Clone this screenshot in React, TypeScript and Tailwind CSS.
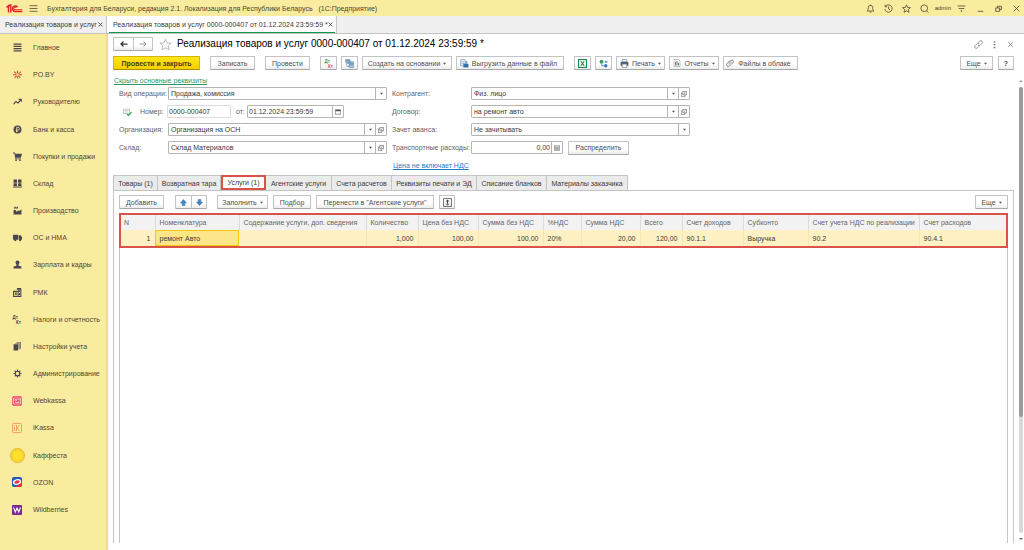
import type { ReactNode } from 'react';
import clsx from 'clsx';

const BUTTON =
  'flex h-[14px] shrink-0 items-center justify-center rounded-[1px] border border-[#c3c3c3] border-b-[#a8a8a8] bg-linear-to-b from-white from-60% to-[#ececec] text-[#4d4d4d] whitespace-nowrap';

interface Column {
  title: string;
  value: string;
  width?: string;
  right?: boolean;
}

const COLUMNS: Column[] = [
  { title: 'N', value: '1', width: 'w-[34px]', right: true },
  { title: 'Номенклатура', value: 'ремонт Авто', width: 'w-[84px]' },
  { title: 'Содержание услуги, доп. сведения', value: '', width: 'w-[127px]' },
  { title: 'Количество', value: '1,000', width: 'w-[52px]', right: true },
  { title: 'Цена без НДС', value: '100,00', width: 'w-[60px]', right: true },
  { title: 'Сумма без НДС', value: '100,00', width: 'w-[65px]', right: true },
  { title: '%НДС', value: '20%', width: 'w-[38px]' },
  { title: 'Сумма НДС', value: '20,00', width: 'w-[59px]', right: true },
  { title: 'Всего', value: '120,00', width: 'w-[42px]', right: true },
  { title: 'Счет доходов', value: '90.1.1', width: 'w-[61px]' },
  { title: 'Субконто', value: 'Выручка', width: 'w-[65px]' },
  { title: 'Счет учета НДС по реализации', value: '90.2', width: 'w-[111px]' },
  { title: 'Счет расходов', value: '90.4.1' },
];

const TABS = [
  { title: 'Товары (1)', width: 'w-[45px]' },
  { title: 'Возвратная тара', width: 'w-[63px]' },
  { title: 'Услуги (1)', width: 'w-[45px]', active: true },
  { title: 'Агентские услуги', width: 'w-[66px]' },
  { title: 'Счета расчетов', width: 'w-[60px]' },
  { title: 'Реквизиты печати и ЭД', width: 'w-[85px]' },
  { title: 'Списание бланков', width: 'w-[70px]' },
  { title: 'Материалы заказчика', width: 'w-[81px]' },
];

const SECTIONS: { title: string; icon: ReactNode }[] = [
  { title: 'Главное', icon: <MenuLinesIcon /> },
  { title: 'PO.BY', icon: <StarBurstIcon /> },
  { title: 'Руководителю', icon: <TrendIcon /> },
  { title: 'Банк и касса', icon: <RubleIcon /> },
  { title: 'Покупки и продажи', icon: <CartIcon /> },
  { title: 'Склад', icon: <WarehouseIcon /> },
  { title: 'Производство', icon: <FactoryIcon /> },
  { title: 'ОС и НМА', icon: <TruckIcon /> },
  { title: 'Зарплата и кадры', icon: <PersonIcon /> },
  { title: 'РМК', icon: <RegisterIcon /> },
  { title: 'Налоги и отчетность', icon: <DebitCreditIcon dark /> },
  { title: 'Настройки учета', icon: <BooksIcon /> },
  { title: 'Администрирование', icon: <GearIcon /> },
  { title: 'Webkassa', icon: <WebkassaIcon /> },
  { title: 'iKassa', icon: <IKassaIcon /> },
  { title: 'Каффеста', icon: <CoinIcon /> },
  { title: 'OZON', icon: <OzonIcon /> },
  { title: 'Wildberries', icon: <WildberriesIcon /> },
];

export default function App() {
  return (
    <div className="flex h-screen flex-col overflow-hidden bg-white font-['Liberation_Sans',Arial,sans-serif] text-[7px] leading-[9px] text-[#3a3a3a]">
      <TitleBar />
      <WindowTabs />
      <div className="flex min-h-0 flex-1">
        <Sidebar />
        <main className="flex min-w-0 flex-1 flex-col pl-[5px]">
          <DocumentHeader />
          <Toolbar />
          <div className="flex min-h-0 flex-1">
            <div className="flex min-w-0 flex-1 flex-col">
              <a href="#details" className="mt-[6px] self-start pl-[1px] text-[#2f9a63] underline">
                Скрыть основные реквизиты
              </a>
              <DocumentForm />
              <TabStrip />
              <ServicesPanel />
            </div>
            <Scrollbar />
          </div>
        </main>
      </div>
    </div>
  );
}

function TitleBar() {
  return (
    <header className="flex h-[16px] shrink-0 items-center bg-[#faec9e] pr-[3px] pl-[6px] text-[#4b4430]">
      <svg viewBox="0 0 32 16" className="h-[9px] w-[18px]" fill="none" stroke="#e0242b" strokeWidth="2.600">
        <path d="M1 6l3.500-3V15M8.500 15V1.500L5 4" />
        <path d="M20.500 5.500A5 5 0 1 0 16 13.500h13" />
        <path d="M18 6.500A2.400 2.400 0 1 0 16 10.200h13" strokeWidth="1.800" />
      </svg>
      <button type="button" aria-label="Меню" className="ml-[5px]">
        <Stroke className="size-[9px]">
          <path d="M1 3h14M1 8h14M1 13h14" />
        </Stroke>
      </button>
      <span className="ml-[9px] flex-1 whitespace-pre">
        Бухгалтерия для Беларуси, редакция 2.1. Локализация для Республики Беларусь{'   '}(1С:Предприятие)
      </span>
      <div className="flex items-center gap-[9px]">
        <IconButton label="Уведомления">
          <path d="M2 12.500h12c-2-2-2-3-2-6a4 4 0 0 0-8 0c0 3 0 4-2 6zM6.500 14.500h3M8 1v1.500" />
        </IconButton>
        <IconButton label="История">
          <path d="M2.500 4.500A6.500 6.500 0 1 1 1.500 9M2 1.500v3.500h3.500M8 4.500V8.500l3 2" />
        </IconButton>
        <IconButton label="Избранное">
          <path d="M8 1.500l2 4.500 5 .5-3.800 3.300 1.200 4.900L8 12.100l-4.400 2.600 1.200-4.900L1 6.500l5-.5z" />
        </IconButton>
        <IconButton label="Поиск">
          <circle cx="7.500" cy="7.500" r="6" />
          <path d="M11.500 12l3.500 3" />
        </IconButton>
        <span className="-mx-[3px] text-[6px]">admin</span>
        <IconButton label="Настройки">
          <path d="M1 3.500h14M3 8h10M7 12h2l-1 1.500z" />
        </IconButton>
      </div>
      <div className="ml-[10px] flex items-center gap-[9px]">
        <IconButton label="Свернуть">
          <path d="M3 13h10" />
        </IconButton>
        <IconButton label="Развернуть">
          <path d="M3 7h7v6H3zM6 7V4h7v6h-3" />
        </IconButton>
        <IconButton label="Закрыть">
          <path d="M3 3l10 10M13 3L3 13" />
        </IconButton>
      </div>
    </header>
  );
}

function WindowTabs() {
  return (
    <div className="flex h-[18px] shrink-0 items-stretch border-b border-[#c4c4c4] bg-[#f0f0f0]">
      <div className="flex w-[107px] items-center justify-between border-r border-[#c4c4c4] pr-[3px] pl-[5px]">
        <span className="whitespace-nowrap">Реализация товаров и услуг</span>
        <CloseMark />
      </div>
      <div className="flex w-[230px] border-r border-[#c4c4c4] bg-white px-[2px]">
        <div className="flex flex-1 items-center justify-between border-b border-[#0b9a50] pr-[2px] pl-[4px]">
          <span className="whitespace-nowrap">Реализация товаров и услуг 0000-000407 от 01.12.2024 23:59:59 *</span>
          <CloseMark />
        </div>
      </div>
    </div>
  );
}

function CloseMark() {
  return (
    <button type="button" aria-label="Закрыть вкладку">
      <svg viewBox="0 0 16 16" className="size-[5px]" fill="none" stroke="#444" strokeWidth="3">
        <path d="M2 2l12 12M14 2L2 14" />
      </svg>
    </button>
  );
}

function Sidebar() {
  return (
    <nav className="flex w-[108px] shrink-0 flex-col border-r-2 border-[#f0dc82] bg-[#faec9e] pb-[27px]">
      {SECTIONS.map((section) => (
        <a key={section.title} href="#section" className="flex flex-1 items-center text-[#4e4536]">
          <span className="ml-[9px] flex w-[16px] justify-center">{section.icon}</span>
          <span className="ml-[8px] whitespace-nowrap">{section.title}</span>
        </a>
      ))}
    </nav>
  );
}

function DocumentHeader() {
  return (
    <div className="flex h-[20px] shrink-0 items-center pr-[9px]">
      <div className="flex">
        <button type="button" aria-label="Назад" className={clsx(BUTTON, 'w-[21px]')}>
          <svg viewBox="0 0 16 16" className="size-[8px]" fill="none" stroke="#333" strokeWidth="2.500">
            <path d="M15 8H2M7 3L2 8l5 5" />
          </svg>
        </button>
        <button type="button" aria-label="Вперед" className={clsx(BUTTON, '-ml-px w-[20px]')}>
          <svg viewBox="0 0 16 16" className="size-[8px]" fill="none" stroke="#999" strokeWidth="2">
            <path d="M1 8h13M9 3l5 5-5 5" />
          </svg>
        </button>
      </div>
      <button type="button" aria-label="В избранное" className="ml-[6px]">
        <svg viewBox="0 0 16 16" className="size-[13px]" fill="none" stroke="#aaa">
          <path d="M8 1.500l2 4.500 5 .3-3.800 3.300 1.200 4.900L8 12l-4.400 2.500 1.200-4.900L1 6.300l5-.3z" />
        </svg>
      </button>
      <h1 className="ml-[5px] flex-1 text-[10px] leading-[14px] whitespace-nowrap text-black">
        Реализация товаров и услуг 0000-000407 от 01.12.2024 23:59:59 *
      </h1>
      <div className="flex items-center gap-[7px] text-[#777]">
        <IconButton label="Ссылка">
          <path d="M7 5l3-3a2.500 2.500 0 0 1 4 4l-3 3a2.500 2.500 0 0 1-4 0M9 11l-3 3a2.500 2.500 0 0 1-4-4l3-3a2.500 2.500 0 0 1 4 0" />
        </IconButton>
        <IconButton label="Действия">
          <path d="M8 2v2.500M8 7v2.500M8 12v2.500" strokeWidth="3" />
        </IconButton>
        <IconButton label="Закрыть документ">
          <path d="M4 4l8 8M12 4l-8 8" />
        </IconButton>
      </div>
    </div>
  );
}

function Toolbar() {
  return (
    <div className="mt-[2px] flex shrink-0 items-center pr-[10px]">
      <button
        type="button"
        className="h-[14px] w-[87px] shrink-0 rounded-[1px] border border-[#d5b400] border-b-[#a88f00] bg-linear-to-b from-[#ffe619] to-[#f5cf00] font-bold text-[#4a4020]"
      >
        Провести и закрыть
      </button>
      <button type="button" className={clsx(BUTTON, 'ml-[10px] w-[45px]')}>Записать</button>
      <button type="button" className={clsx(BUTTON, 'ml-[10px] w-[45px]')}>Провести</button>
      <button type="button" aria-label="Показать проводки" className={clsx(BUTTON, 'ml-[10px] w-[17px]')}>
        <DebitCreditIcon />
      </button>
      <button type="button" aria-label="Структура подчиненности" className={clsx(BUTTON, 'ml-[4px] w-[17px]')}>
        <StructureIcon />
      </button>
      <button type="button" className={clsx(BUTTON, 'ml-[4px] w-[90px] gap-[3px]')}>
        Создать на основании <Caret />
      </button>
      <button type="button" className={clsx(BUTTON, 'ml-[4px] w-[108px] gap-[3px] pr-[3px]')}>
        <ExportIcon /> Выгрузить данные в файл
      </button>
      <button type="button" aria-label="Excel" className={clsx(BUTTON, 'ml-[10px] w-[17px]')}>
        <ExcelIcon />
      </button>
      <button type="button" aria-label="Обмен" className={clsx(BUTTON, 'ml-[4px] w-[17px]')}>
        <ExchangeIcon />
      </button>
      <button type="button" className={clsx(BUTTON, 'ml-[4px] w-[49px] gap-[3px]')}>
        <PrinterIcon /> Печать <Caret />
      </button>
      <button type="button" className={clsx(BUTTON, 'ml-[4px] w-[50px] gap-[3px]')}>
        <ReportIcon /> Отчеты <Caret />
      </button>
      <button type="button" className={clsx(BUTTON, 'ml-[4px] w-[75px] gap-[4px] pr-[4px]')}>
        <ClipIcon /> Файлы в облаке
      </button>
      <button type="button" className={clsx(BUTTON, 'ml-auto w-[33px] gap-[3px]')}>
        Еще <Caret />
      </button>
      <button type="button" className={clsx(BUTTON, 'ml-[5px] w-[16px] font-bold')}>?</button>
    </div>
  );
}

function DocumentForm() {
  return (
    <form className="mt-[2px] flex shrink-0 gap-[5px] pl-[6px]">
      <div className="flex w-[268px] flex-col gap-[5px]">
        <SelectField id="operation" label="Вид операции:" value="Продажа, комиссия" labelWidth="w-[49px]" />
        <div className="flex h-[13px] items-center">
          <span className="ml-[4px] flex w-[17px]">
            <PostedIcon />
          </span>
          <label htmlFor="number" className="w-[27px] text-[#5f5f5f]">Номер:</label>
          <input
            id="number"
            defaultValue="0000-000407"
            className="h-[13px] w-[64px] rounded-[1px] border border-[#dcdcdc] pl-[1px]"
          />
          <label htmlFor="date" className="ml-[5px] w-[11px] text-[#5f5f5f]">от:</label>
          <div className="flex h-[13px] w-[97px] rounded-[1px] border border-[#b5b5b5]">
            <input id="date" defaultValue="01.12.2024 23:59:59" className="min-w-0 flex-1 pl-[1px]" />
            <FieldButton label="Выбрать дату"><CalendarIcon /></FieldButton>
          </div>
        </div>
        <SelectField id="company" label="Организация:" value="Организация на ОСН" labelWidth="w-[49px]" open />
        <SelectField id="store" label="Склад:" value="Склад Материалов" labelWidth="w-[49px]" open />
      </div>
      <div className="flex w-[298px] flex-col gap-[5px]">
        <SelectField id="partner" label="Контрагент:" value="Физ. лицо" labelWidth="w-[79px]" open />
        <SelectField id="contract" label="Договор:" value="на ремонт авто" labelWidth="w-[79px]" open />
        <SelectField id="advance" label="Зачет аванса:" value="Не зачитывать" labelWidth="w-[79px]" />
        <div className="flex h-[13px] items-center">
          <label htmlFor="transport" className="w-[79px] whitespace-nowrap text-[#5f5f5f]">Транспортные расходы:</label>
          <div className="flex h-[13px] w-[92px] rounded-[1px] border border-[#b5b5b5]">
            <input id="transport" defaultValue="0,00" className="min-w-0 flex-1 pr-[1px] text-right" />
            <FieldButton label="Калькулятор"><CalculatorIcon /></FieldButton>
          </div>
          <button type="button" className={clsx(BUTTON, 'ml-[5px] w-[61px]')}>Распределить</button>
        </div>
        <a href="#price" className="self-start pl-[1px] leading-[13px] text-[#2a78c0] underline">Цена не включает НДС</a>
      </div>
    </form>
  );
}

interface SelectFieldProps {
  id: string;
  label: string;
  value: string;
  labelWidth: string;
  open?: boolean;
}

function SelectField({ id, label, value, labelWidth, open }: SelectFieldProps) {
  return (
    <div className="flex h-[13px] items-center">
      <label htmlFor={id} className={clsx('shrink-0 whitespace-nowrap text-[#5f5f5f]', labelWidth)}>{label}</label>
      <div className="flex h-[13px] flex-1 rounded-[1px] border border-[#b5b5b5]">
        <select id={id} defaultValue={value} className="min-w-0 flex-1 appearance-none pl-[2px]">
          <option>{value}</option>
        </select>
        <FieldButton label="Выбрать"><Caret /></FieldButton>
        {open && <FieldButton label="Открыть"><OpenIcon /></FieldButton>}
      </div>
    </div>
  );
}

function FieldButton({ label, children }: { label: string; children: ReactNode }) {
  return (
    <button
      type="button"
      aria-label={label}
      className="flex w-[11px] shrink-0 items-center justify-center border-l border-[#b5b5b5] text-[#555]"
    >
      {children}
    </button>
  );
}

function TabStrip() {
  return (
    <div role="tablist" className="mt-[3px] flex h-[15px] shrink-0">
      {TABS.map((tab) => (
        <button
          key={tab.title}
          type="button"
          role="tab"
          aria-selected={!!tab.active}
          className={clsx(
            'shrink-0 whitespace-nowrap',
            tab.width,
            tab.active
              ? 'border-2 border-[#d9534a] bg-white'
              : 'border-t border-r border-[#c4c4c4] bg-[#ebebeb] first:border-l',
          )}
        >
          {tab.title}
        </button>
      ))}
    </div>
  );
}

function ServicesPanel() {
  return (
    <section className="mr-[3px] mb-[7px] flex min-h-0 flex-1 flex-col border-x border-t border-[#c4c4c4] px-[5px] pt-[4px]">
      <div className="flex shrink-0">
        <button type="button" className={clsx(BUTTON, 'w-[45px]')}>Добавить</button>
        <button type="button" aria-label="Вверх" className={clsx(BUTTON, 'ml-[11px] w-[17px]')}>
          <ArrowIcon />
        </button>
        <button type="button" aria-label="Вниз" className={clsx(BUTTON, '-ml-px w-[16px]')}>
          <ArrowIcon down />
        </button>
        <button type="button" className={clsx(BUTTON, 'ml-[10px] w-[51px] gap-[3px]')}>
          Заполнить <Caret />
        </button>
        <button type="button" className={clsx(BUTTON, 'ml-[5px] w-[38px]')}>Подбор</button>
        <button type="button" className={clsx(BUTTON, 'ml-[5px] w-[118px]')}>Перенести в "Агентские услуги"</button>
        <button type="button" aria-label="Высота строк" className={clsx(BUTTON, 'ml-[5px] w-[16px]')}>
          <RowHeightIcon />
        </button>
        <button type="button" className={clsx(BUTTON, 'ml-auto w-[33px] gap-[3px]')}>
          Еще <Caret />
        </button>
      </div>
      <div className="mt-[4px] min-h-0 flex-1 border-x border-[#c4c4c4]">
        <div className="-mx-px border-2 border-[#d9534a]">
          <table className="w-full table-fixed border-collapse">
            <thead>
              <tr className="h-[15px] bg-[#f2f2f2] text-[#666]">
                {COLUMNS.map((col) => (
                  <th
                    key={col.title}
                    className={clsx(
                      'border-r border-[#dcdcdc] px-[4px] text-left font-normal whitespace-nowrap last:border-r-0 first:pl-[3px]',
                      col.width,
                    )}
                  >
                    {col.title}
                  </th>
                ))}
              </tr>
            </thead>
            <tbody>
              <tr className="h-[16px] bg-[#fff1c4]">
                {COLUMNS.map((col, i) => (
                  <td
                    key={col.title}
                    className={clsx(
                      'px-[4px] whitespace-nowrap',
                      col.right && 'text-right',
                      i === 1
                        ? 'bg-[#fde58a] outline outline-offset-[-1px] outline-[#f2c80f]'
                        : 'border-r border-[#f7e6ae] last:border-r-0',
                    )}
                  >
                    {col.value}
                  </td>
                ))}
              </tr>
            </tbody>
          </table>
        </div>
      </div>
    </section>
  );
}

function Scrollbar() {
  return (
    <div className="flex w-[7px] shrink-0 flex-col items-center pt-[9px] pb-[9px]">
      <svg viewBox="0 0 8 8" className="size-[4px] shrink-0" fill="#999">
        <path d="M0 6l4-4 4 4z" />
      </svg>
      <div className="mt-[4px] mb-[4px] flex w-[4px] flex-1 flex-col rounded-full bg-[#d9d9d9]">
        <div className="h-[74%] rounded-full bg-[#9b9b9b]" />
      </div>
      <svg viewBox="0 0 8 8" className="size-[4px] shrink-0" fill="#666">
        <path d="M0 2l4 4 4-4z" />
      </svg>
    </div>
  );
}

function Stroke({ className, children }: { className: string; children: ReactNode }) {
  return (
    <svg viewBox="0 0 16 16" className={className} fill="none" stroke="currentColor" strokeWidth="1.400">
      {children}
    </svg>
  );
}

function IconButton({ label, children }: { label: string; children: ReactNode }) {
  return (
    <button type="button" aria-label={label}>
      <Stroke className="size-[9px]">{children}</Stroke>
    </button>
  );
}

function Caret() {
  return (
    <svg viewBox="0 0 8 8" className="size-[3px] shrink-0" fill="#555">
      <path d="M0 2h8L4 7z" />
    </svg>
  );
}

function Glyph({ children }: { children: ReactNode }) {
  return (
    <svg viewBox="0 0 16 16" className="size-[9px] shrink-0" fill="#4a4550">
      {children}
    </svg>
  );
}

function MenuLinesIcon() {
  return (
    <Glyph>
      <path d="M1 1h14v2H1zM1 5h14v2H1zM1 9h14v2H1zM1 13h14v2H1z" />
    </Glyph>
  );
}

function StarBurstIcon() {
  return (
    <Glyph>
      <path d="M8 1v5M8 11v4M2 3l4 3.500M14 3l-4 3.500M0 8.500h6M10 8.500h6M3 14l3.500-4M13 14l-3.500-4" stroke="#e23f3a" strokeWidth="1.900" />
    </Glyph>
  );
}

function TrendIcon() {
  return (
    <Glyph>
      <path d="M1 13l4-5 4 2.500L14 5" fill="none" stroke="#4a4550" strokeWidth="2" />
      <path d="M9 3h6.500v6.500z" />
    </Glyph>
  );
}

function RubleIcon() {
  return (
    <Glyph>
      <circle cx="8" cy="8" r="7" />
      <path d="M6.500 13V4h2.500a2 2 0 0 1 0 5H5M5 11h4" fill="none" stroke="#faec9e" strokeWidth="1.400" />
    </Glyph>
  );
}

function CartIcon() {
  return (
    <Glyph>
      <path d="M0 1h3.500l.7 2H16l-2 7H5.500v1.500H14V13H4V10L2.500 2.500H0z" />
      <circle cx="5.500" cy="14.500" r="1.500" />
      <circle cx="12.500" cy="14.500" r="1.500" />
    </Glyph>
  );
}

function WarehouseIcon() {
  return (
    <Glyph>
      <path d="M1 1h6v5.500H1zM9 1h6v5.500H9zM1 7.500h6v5H1zM9 7.500h6v5H9zM0 13.500h16V15H0z" />
    </Glyph>
  );
}

function FactoryIcon() {
  return (
    <Glyph>
      <path d="M1 15V7h4l1 3 4-2.500v2L15 6v9zM2 2l3-1v3L2 5.500zM6 2l3-1v3L6 5.500z" />
    </Glyph>
  );
}

function TruckIcon() {
  return (
    <Glyph>
      <path d="M0 3h9v9H0zM10 4h3.500L16 7.500V12h-6z" />
      <circle cx="4" cy="12.500" r="2" />
      <circle cx="12.500" cy="12.500" r="2" />
    </Glyph>
  );
}

function PersonIcon() {
  return (
    <Glyph>
      <circle cx="8" cy="4.500" r="3.500" />
      <path d="M6 7h4v3l5 1.500V15H1v-3.500L6 10z" />
    </Glyph>
  );
}

function RegisterIcon() {
  return (
    <Glyph>
      <path d="M1 6h8v9H1zM7 2h7v13H9" fill="none" stroke="#4a4550" strokeWidth="1.800" />
      <path d="M3 8h4v2H3zM9 4h4v3H9zM10 9h3v4h-3zM3 11h4v2H3zM7 0h7v2H7z" />
    </Glyph>
  );
}

function DebitCreditIcon({ dark }: { dark?: boolean }) {
  return (
    <svg viewBox="0 0 20 18" className="h-[9px] w-[10px] shrink-0" fontFamily="Liberation Sans, sans-serif" fontSize="9" fontWeight="bold">
      <text x="1" y="8" fill={dark ? '#4a4550' : '#3f9a63'}>Дт</text>
      <text x="8" y="17" fill={dark ? '#4a4550' : '#d9604a'}>Кт</text>
    </svg>
  );
}

function BooksIcon() {
  return (
    <Glyph>
      <path d="M1 4h8v11H1zM10 3H4V2h7v11h-1zM13 1H6V0h8v12h-1z" />
      <path d="M12 2v11" stroke="#4a4550" />
    </Glyph>
  );
}

function GearIcon() {
  return (
    <Glyph>
      <circle cx="8" cy="8" r="4" fill="none" stroke="#4a4550" strokeWidth="2" />
      <path d="M8 1v2.500M8 12.500V15M1 8h2.500M12.500 8H15M3 3l2 2M11 11l2 2M13 3l-2 2M5 11l-2 2" stroke="#4a4550" strokeWidth="2" />
    </Glyph>
  );
}

function WebkassaIcon() {
  return (
    <svg viewBox="0 0 20 20" className="size-[10px]" fill="none" stroke="#fff">
      <rect width="20" height="20" rx="3" fill="#e83a4c" />
      <path d="M3 4h14v12H3zM6 7h3v3H6zM11 7h4M11 10h4M6 13h9" strokeWidth="1.300" />
    </svg>
  );
}

function IKassaIcon() {
  return (
    <svg viewBox="0 0 20 20" className="size-[10px]" fill="none" stroke="#ee8a4c" strokeWidth="1.500">
      <rect x="1" y="1" width="18" height="18" rx="2" />
      <path d="M5 8v8M5 4v2M9 4v12M15 4l-5 6 5 6" />
    </svg>
  );
}

function CoinIcon() {
  return (
    <svg viewBox="0 0 30 30" className="size-[15px] shrink-0" fill="#ffe02e" stroke="#dba520">
      <circle cx="15" cy="15" r="14" strokeWidth="1.500" />
      <circle cx="15" cy="15" r="11" strokeDasharray="2 1.500" />
    </svg>
  );
}

function OzonIcon() {
  return (
    <svg viewBox="0 0 20 20" className="size-[10px]">
      <rect width="20" height="20" rx="4" fill="#2356b8" />
      <path d="M20 9v7a4 4 0 0 1-4 4H7z" fill="#ee2c4c" />
      <ellipse cx="10" cy="10" rx="8.500" ry="5.500" fill="#fff" transform="rotate(-15 10 10)" />
      <ellipse cx="10" cy="10" rx="5.500" ry="3.200" fill="#e2304c" transform="rotate(-15 10 10)" />
    </svg>
  );
}

function WildberriesIcon() {
  return (
    <svg viewBox="0 0 20 20" className="size-[10px]">
      <rect width="20" height="20" rx="2" fill="#7b2a95" />
      <path d="M3 5l3.500 9L10 6l3.500 8L17 5" fill="none" stroke="#fff" strokeWidth="2.200" />
    </svg>
  );
}

function StructureIcon() {
  return (
    <svg viewBox="0 0 16 16" className="size-[9px]" fill="#b9cde2" stroke="#4f7ba8">
      <path d="M1 1h8v5H1zM7 5h8v5H7zM7 11h8v4H7z" />
      <path d="M3 6v7h4M3 8h4" fill="none" />
      <path d="M2 3h6M8 7.500h6" strokeWidth="1.500" />
    </svg>
  );
}

function ExportIcon() {
  return (
    <svg viewBox="0 0 16 16" className="size-[9px] shrink-0">
      <path d="M1 1h8l3 3v8H1z" fill="#e7eef5" stroke="#6a88a5" />
      <path d="M3 5h6M3 8h4" stroke="#6a88a5" />
      <path d="M6 9h9v6H6z" fill="#2f6fa8" />
      <path d="M10.500 4v6M8 8l2.500 3L13 8" fill="none" stroke="#2a78c0" strokeWidth="1.500" />
    </svg>
  );
}

function ExcelIcon() {
  return (
    <svg viewBox="0 0 16 16" className="size-[9px]" fill="none" stroke="#1e8a4c">
      <rect x="1" y="1" width="14" height="14" strokeWidth="2" />
      <path d="M5 4l6 8M11 4l-6 8" strokeWidth="2.200" />
    </svg>
  );
}

function ExchangeIcon() {
  return (
    <svg viewBox="0 0 16 16" className="size-[9px]">
      <circle cx="4.500" cy="5" r="3.500" fill="#3d9b62" />
      <path d="M10 3h5v4h-5z" fill="#7aa6d0" />
      <path d="M5 9v3h5" fill="none" stroke="#3a78b5" strokeWidth="1.500" />
      <circle cx="12" cy="12" r="3" fill="#3a78b5" />
    </svg>
  );
}

function PrinterIcon() {
  return (
    <svg viewBox="0 0 16 16" className="size-[9px] shrink-0" fill="#54657a">
      <path d="M4 1h8v4H4z" fill="#fff" stroke="#54657a" />
      <path d="M1 5h14v7H1z" />
      <path d="M4 9h8v6H4z" fill="#fff" stroke="#54657a" />
    </svg>
  );
}

function ReportIcon() {
  return (
    <svg viewBox="0 0 16 16" className="size-[8px] shrink-0">
      <path d="M2 1h9l3 3v11H2z" fill="#fff" stroke="#888" />
      <path d="M4 6h2v7H4z" fill="#3f9a63" />
      <path d="M7 4h2v9H7z" fill="#d9534a" />
      <path d="M10 8h2v5h-2z" fill="#3a78b5" />
    </svg>
  );
}

function ClipIcon() {
  return (
    <svg viewBox="0 0 16 16" className="size-[8px] shrink-0" fill="none" stroke="#666" strokeWidth="1.500">
      <path d="M4 9l6-6a2.500 2.500 0 0 1 4 4l-7 7a3.500 3.500 0 0 1-5-5l7-7M6 11l6-6" />
    </svg>
  );
}

function PostedIcon() {
  return (
    <svg viewBox="0 0 18 16" className="h-[8px] w-[9px]" fill="none" stroke="#8a9a90">
      <path d="M1 2h12v9H1zM3 5h8M3 8h6" />
      <path d="M8 12l3 3 6-7" stroke="#3fa863" strokeWidth="2.500" />
    </svg>
  );
}

function CalendarIcon() {
  return (
    <svg viewBox="0 0 16 16" className="size-[6px]" fill="none" stroke="#555" strokeWidth="1.500">
      <path d="M1 2h14v12H1z" />
      <path d="M1 4h14" strokeWidth="4" />
    </svg>
  );
}

function CalculatorIcon() {
  return (
    <svg viewBox="0 0 16 16" className="size-[6px]" fill="none" stroke="#777" strokeWidth="1.500">
      <path d="M1 1h14v14H1zM1 5h14M1 8h14M1 11h14M5 5v10M10 5v10" />
    </svg>
  );
}

function OpenIcon() {
  return (
    <svg viewBox="0 0 16 16" className="size-[6px]" fill="none" stroke="#666" strokeWidth="1.800">
      <path d="M5 1h10v9H5zM5 5H1v10h9v-5M8 7l4-3" />
    </svg>
  );
}

function ArrowIcon({ down }: { down?: boolean }) {
  return (
    <svg viewBox="0 0 16 16" className="size-[7px]" fill="#3f86c6" stroke="#2a66a0">
      <path d={down ? 'M5 1h6v6h4l-7 8-7-8h4z' : 'M5 15h6V9h4L8 1 1 9h4z'} />
    </svg>
  );
}

function RowHeightIcon() {
  return (
    <svg viewBox="0 0 16 16" className="size-[9px]" fill="#444">
      <path d="M1 1h14v14H1z" fill="none" stroke="#555" strokeWidth="1.500" />
      <path d="M7 5h2v6H7zM4.500 6L8 2.500 11.500 6zM4.500 10L8 13.500 11.500 10z" />
    </svg>
  );
}
